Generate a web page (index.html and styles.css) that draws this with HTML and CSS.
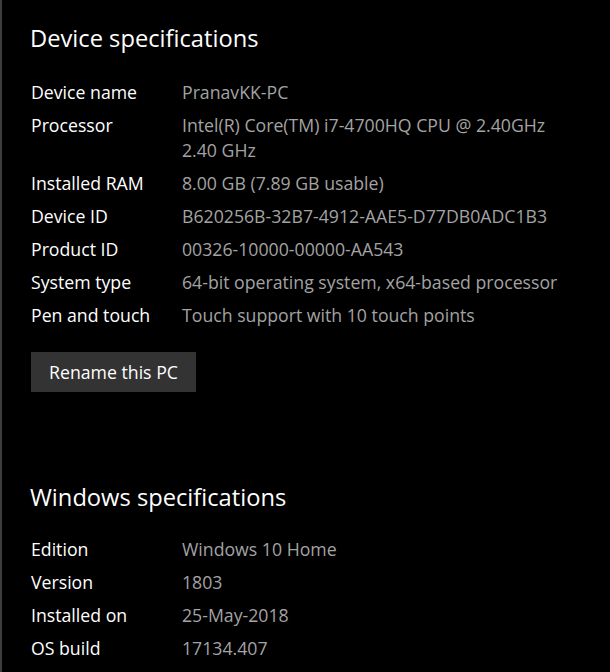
FILE: index.html
```html
<!DOCTYPE html>
<html lang="en">
<head>
    <meta charset="UTF-8">
    <title>About</title>
    <link rel="stylesheet" href="styles.css">
</head>
<body>
    <div class="settings-page">
        <section class="spec-section">
            <h2 class="spec-title">Device specifications</h2>
            <dl class="spec-list">
                <dt>Device name</dt>
                <dd>PranavKK-PC</dd>
                <dt>Processor</dt>
                <dd>Intel(R) Core(TM) i7-4700HQ CPU @ 2.40GHz<br>2.40 GHz</dd>
                <dt>Installed RAM</dt>
                <dd>8.00 GB (7.89 GB usable)</dd>
                <dt>Device ID</dt>
                <dd>B620256B-32B7-4912-AAE5-D77DB0ADC1B3</dd>
                <dt>Product ID</dt>
                <dd>00326-10000-00000-AA543</dd>
                <dt>System type</dt>
                <dd>64-bit operating system, x64-based processor</dd>
                <dt>Pen and touch</dt>
                <dd>Touch support with 10 touch points</dd>
            </dl>
            <button class="rename-button" type="button">Rename this PC</button>
        </section>

        <section class="spec-section windows-specs">
            <h2 class="spec-title">Windows specifications</h2>
            <dl class="spec-list">
                <dt>Edition</dt>
                <dd>Windows 10 Home</dd>
                <dt>Version</dt>
                <dd>1803</dd>
                <dt>Installed on</dt>
                <dd>25-May-2018</dd>
                <dt>OS build</dt>
                <dd>17134.407</dd>
            </dl>
        </section>
    </div>
</body>
</html>
```

FILE: styles.css
```css
:root {
    --bg: #000000;
    --edge: #3d3d3d;
    --text: #ffffff;
    --muted: #a3a3a3;
    --button: #333333;
}

* {
    box-sizing: border-box;
    margin: 0;
    padding: 0;
}

html, body {
    height: 100%;
}

body {
    font-family: 'Open Sans', 'Noto Sans', sans-serif;
    background-color: var(--bg);
    color: var(--text);
    overflow: hidden;
}

.settings-page {
    min-height: 100%;
    border-left: 2px solid var(--edge);
    padding: 21px 0 0 29px;
}

.spec-title {
    font-size: 23.7px;
    font-weight: 400;
    line-height: 34px;
    margin-bottom: 25px;
    margin-left: -1px;
}

.spec-list {
    display: grid;
    grid-template-columns: 151px 1fr;
    row-gap: 8px;
    font-size: 17.7px;
    line-height: 25px;
}

.spec-list dt {
    color: var(--text);
}

.spec-list dd {
    color: var(--muted);
}

.rename-button {
    display: block;
    margin-top: 24px;
    width: 165px;
    height: 40px;
    background-color: var(--button);
    color: var(--text);
    border: none;
    font-family: inherit;
    font-size: 17.7px;
}

.windows-specs {
    margin-top: 88px;
}

.windows-specs .spec-title {
    margin-bottom: 23px;
}
```
